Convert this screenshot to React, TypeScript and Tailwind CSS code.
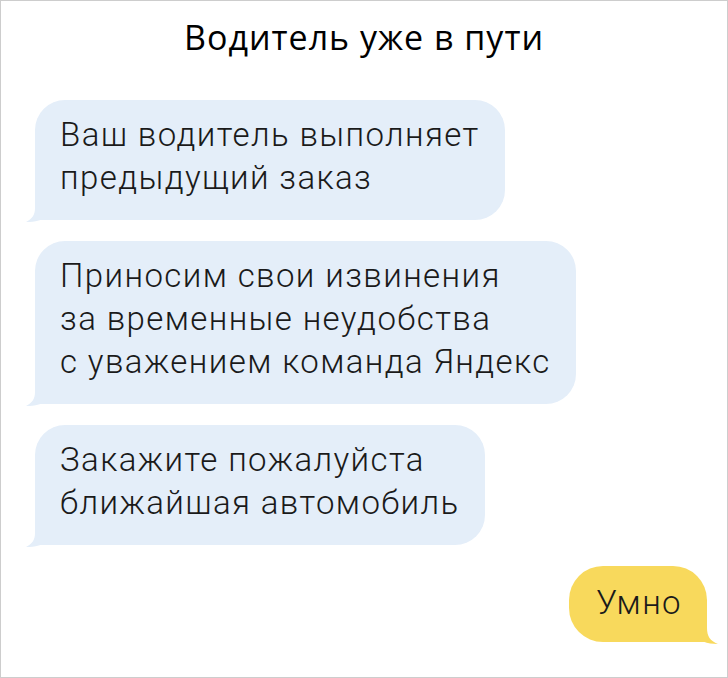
const BLUE = "#e4eef9";
const YELLOW = "#f8d95c";

function TailLeft({ color }: { color: string }) {
  return (
    <svg
      className="absolute left-[-9px] bottom-[-2px]"
      width="40"
      height="22"
      viewBox="0 0 40 22"
      aria-hidden="true"
    >
      <path
        d="M9 0 L9 8 C9 15 6 19 0 22 C9 22 17 20 23 16 C27 19 32 20 40 20 L40 0 Z"
        fill={color}
      />
    </svg>
  );
}

function TailRight({ color }: { color: string }) {
  return (
    <svg
      className="absolute right-[-11px] bottom-[-2px]"
      width="44"
      height="26"
      viewBox="0 0 44 26"
      aria-hidden="true"
    >
      <path
        d="M33 0 L33 10 C33 18 36 23 44 26 C33 26 25 23 19 17 C15 21 9 24 0 24 L0 0 Z"
        fill={color}
      />
    </svg>
  );
}

function Incoming({ lines }: { lines: string[] }) {
  return (
    <div className="relative self-start">
      <div className="relative z-10 rounded-[30px] rounded-bl-none bg-[#e4eef9] pl-[25px] pr-[25px] pt-[13px] pb-[21px] text-[33px] leading-[43px] tracking-[1.4px] font-light text-[#1a1a1a]">
        {lines.map((l) => (
          <div key={l}>{l}</div>
        ))}
      </div>
      <TailLeft color={BLUE} />
    </div>
  );
}

export default function App() {
  return (
    <div
      className="w-[728px] h-[678px] border border-[#cdcdcd] bg-white flex flex-col"
      style={{ fontFamily: "Roboto, 'Noto Sans', sans-serif" }}
    >
      <h1 className="mt-[16px] text-center text-[34px] leading-[40px] tracking-[1px] font-medium text-black font-['Open_Sans','Noto_Sans',sans-serif]">
        Водитель уже в пути
      </h1>

      <div className="mt-[43px] flex flex-col gap-[21px] pl-[34px] pr-[20px]">
        <Incoming lines={["Ваш водитель выполняет", "предыдущий заказ"]} />
        <Incoming
          lines={[
            "Приносим свои извинения",
            "за временные неудобства",
            "с уважением команда Яндекс",
          ]}
        />
        <Incoming lines={["Закажите пожалуйста", "ближайшая автомобиль"]} />

        <div className="relative self-end">
          <div className="relative z-10 rounded-[34px] rounded-br-none bg-[#f8d95c] pl-[27px] pr-[25px] pt-[15px] pb-[18px] text-[33px] leading-[43px] tracking-[1.4px] font-light text-[#1a1a1a]">
            Умно
          </div>
          <TailRight color={YELLOW} />
        </div>
      </div>
    </div>
  );
}
